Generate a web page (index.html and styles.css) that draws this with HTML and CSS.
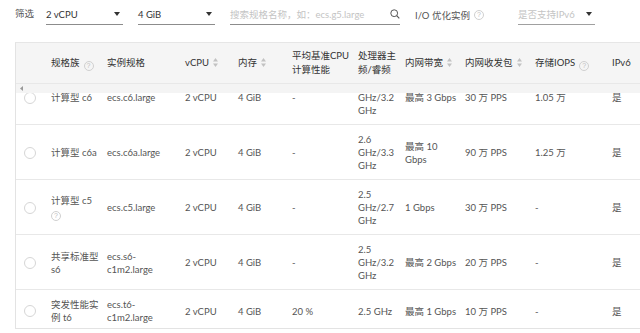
FILE: index.html
```html
<!DOCTYPE html>
<html lang="zh-CN">
<head>
<meta charset="utf-8">
<title>实例规格</title>
<link rel="stylesheet" href="styles.css">
</head>
<body>
<div class="filters">
  <span class="flabel">筛选</span>
  <div class="select sel1"><span class="val">2 vCPU</span><i class="caret"></i></div>
  <div class="select sel2"><span class="val">4 GiB</span><i class="caret"></i></div>
  <div class="select search"><span class="ph">搜索规格名称，如：ecs.g5.large</span>
    <svg class="mag" width="10" height="10" viewBox="0 0 10 10"><circle cx="4.2" cy="4.2" r="3.4" fill="none" stroke="#555" stroke-width="1"/><line x1="6.7" y1="6.7" x2="9.3" y2="9.3" stroke="#555" stroke-width="1.1"/></svg>
  </div>
  <div class="io"><span>I/O 优化实例</span><span class="help">?</span></div>
  <div class="select sel3"><span class="ph">是否支持IPv6</span><i class="caret"></i></div>
</div>

<div class="grid">
  <table class="tbl thead">
    <colgroup><col class="c0"><col class="c1"><col class="c2"><col class="c3"><col class="c4"><col class="c5"><col class="c6"><col class="c7"><col class="c8"><col class="c9"><col class="c10"></colgroup>
    <tr>
      <th></th>
      <th>规格族<span class="help">?</span></th>
      <th>实例规格</th>
      <th>vCPU<svg class="sort" width="5" height="9" viewBox="0 0 5 9"><polygon points="2.5,0 5,3.5 0,3.5"/><polygon points="0,5.5 5,5.5 2.5,9"/></svg></th>
      <th>内存<svg class="sort" width="5" height="9" viewBox="0 0 5 9"><polygon points="2.5,0 5,3.5 0,3.5"/><polygon points="0,5.5 5,5.5 2.5,9"/></svg></th>
      <th>平均基准CPU<br>计算性能</th>
      <th>处理器主<br>频/睿频</th>
      <th>内网带宽<svg class="sort" width="5" height="9" viewBox="0 0 5 9"><polygon points="2.5,0 5,3.5 0,3.5"/><polygon points="0,5.5 5,5.5 2.5,9"/></svg></th>
      <th>内网收发包<svg class="sort" width="5" height="9" viewBox="0 0 5 9"><polygon points="2.5,0 5,3.5 0,3.5"/><polygon points="0,5.5 5,5.5 2.5,9"/></svg></th>
      <th>存储IOPS<span class="help">?</span></th>
      <th>IPv6</th>
    </tr>
  </table>
  <div class="hscroll"><svg width="3" height="5" viewBox="0 0 3 5"><polygon points="3,0 3,5 0,2.5" fill="#999"/></svg></div>
  <div class="viewport">
    <table class="tbl tbody">
      <colgroup><col class="c0"><col class="c1"><col class="c2"><col class="c3"><col class="c4"><col class="c5"><col class="c6"><col class="c7"><col class="c8"><col class="c9"><col class="c10"></colgroup>
      <tr>
        <td><i class="radio"></i></td>
        <td>计算型 c6</td>
        <td>ecs.c6.large</td>
        <td>2 vCPU</td>
        <td>4 GiB</td>
        <td>-</td>
        <td>2.5<br>GHz/3.2<br>GHz</td>
        <td>最高 3 Gbps</td>
        <td>30 万 PPS</td>
        <td>1.05 万</td>
        <td>是</td>
      </tr>
      <tr>
        <td><i class="radio"></i></td>
        <td>计算型 c6a</td>
        <td>ecs.c6a.large</td>
        <td>2 vCPU</td>
        <td>4 GiB</td>
        <td>-</td>
        <td>2.6<br>GHz/3.3<br>GHz</td>
        <td>最高 10<br>Gbps</td>
        <td>90 万 PPS</td>
        <td>1.25 万</td>
        <td>是</td>
      </tr>
      <tr>
        <td><i class="radio"></i></td>
        <td>计算型 c5<br><span class="help">?</span></td>
        <td>ecs.c5.large</td>
        <td>2 vCPU</td>
        <td>4 GiB</td>
        <td>-</td>
        <td>2.5<br>GHz/2.7<br>GHz</td>
        <td>1 Gbps</td>
        <td>30 万 PPS</td>
        <td>-</td>
        <td>是</td>
      </tr>
      <tr>
        <td><i class="radio"></i></td>
        <td>共享标准型<br>s6</td>
        <td>ecs.s6-<br>c1m2.large</td>
        <td>2 vCPU</td>
        <td>4 GiB</td>
        <td>-</td>
        <td>2.5<br>GHz/3.2<br>GHz</td>
        <td>最高 2 Gbps</td>
        <td>20 万 PPS</td>
        <td>-</td>
        <td>是</td>
      </tr>
      <tr>
        <td><i class="radio"></i></td>
        <td>突发性能实<br>例 t6</td>
        <td>ecs.t6-<br>c1m2.large</td>
        <td>2 vCPU</td>
        <td>4 GiB</td>
        <td>20 %</td>
        <td>2.5 GHz</td>
        <td>最高 1 Gbps</td>
        <td>10 万 PPS</td>
        <td>-</td>
        <td>是</td>
      </tr>
    </table>
  </div>
</div>
</body>
</html>
```

FILE: styles.css
```css
* { box-sizing: border-box; }
html, body { margin: 0; padding: 0; background: #fff; }
body {
  font-family: Lato, "Noto Sans CJK SC", sans-serif;
  font-size: 9.5px;
  color: #555;
  width: 640px;
  height: 333px;
  overflow: hidden;
}

/* filter bar */
.filters {
  display: flex;
  align-items: flex-end;
  padding: 4px 0 0 15px;
  height: 25px;
}
.flabel {
  width: 31px;
  height: 21px;
  line-height: 20px;
  color: #555;
}
.select {
  height: 21px;
  border-bottom: 1px solid #8c8c8c;
  display: flex;
  align-items: center;
  justify-content: space-between;
  line-height: 13px;
}
.sel1 { width: 77px; }
.sel2 { width: 77px; margin-left: 15px; }
.search { width: 170px; margin-left: 15px; }
.sel3 { width: 77px; margin-left: 26px; border-bottom-color: #a0a0a0; }
.val { color: #333; }
.ph { color: #c4c4c4; }
.caret {
  width: 0;
  height: 0;
  border-left: 3px solid transparent;
  border-right: 3px solid transparent;
  border-top: 4px solid #333;
  margin-right: 3px;
}
.io {
  margin-left: 15px;
  width: 77px;
  height: 21px;
  display: flex;
  align-items: center;
  color: #555;
}

.help {
  display: inline-block;
  width: 10px;
  height: 10px;
  border: 1px solid #d0d0d0;
  border-radius: 50%;
  color: #c0c0c0;
  font-size: 7px;
  line-height: 8px;
  text-align: center;
  margin-left: 4px;
  vertical-align: -2px;
  font-family: "Liberation Sans", sans-serif;
}

/* grid */
.grid {
  margin-top: 17px;
  margin-left: 15px;
  width: 625px;
  border-left: 1px solid #e3e3e3;
  border-top: 1px solid #e6e6e6;
  overflow: hidden;
}
.tbl {
  table-layout: fixed;
  border-collapse: collapse;
  width: 671px;
}
.c0 { width: 29px; }
.c1 { width: 56px; }
.c2 { width: 78px; }
.c3 { width: 53px; }
.c4 { width: 54px; }
.c5 { width: 66px; }
.c6 { width: 47px; }
.c7 { width: 60px; }
.c8 { width: 70px; }
.c9 { width: 77px; }
.c10 { width: 81px; }

.thead { background: #f5f5f5; }
.thead th {
  height: 40px;
  padding: 0 2px 0 6px;
  text-align: left;
  font-weight: normal;
  color: #333;
  line-height: 14px;
  white-space: nowrap;
  vertical-align: middle;
}
.sort {
  fill: #c2c2c2;
  margin-left: 4px;
  vertical-align: -1px;
}

.hscroll {
  height: 10px;
  width: 671px;
  background: #f4f4f4;
  border-top: 1px solid #e8e8e8;
  display: flex;
  align-items: center;
  padding-left: 4px;
}

.viewport {
  height: 236px;
  overflow: hidden;
  border-bottom: 1px solid #e3e3e3;
}
.tbody { margin-top: -23px; }
.tbody td {
  padding: 8px 2px 7px 6px;
  line-height: 13px;
  border-bottom: 1px solid #e8e8e8;
  vertical-align: middle;
  white-space: nowrap;
  color: #555;
}
.tbody td .help { margin-left: 0; vertical-align: -1px; }
.radio {
  display: block;
  width: 12px;
  height: 12px;
  border: 1px solid #d6d6d6;
  border-radius: 50%;
  margin-left: 2px;
}
```
